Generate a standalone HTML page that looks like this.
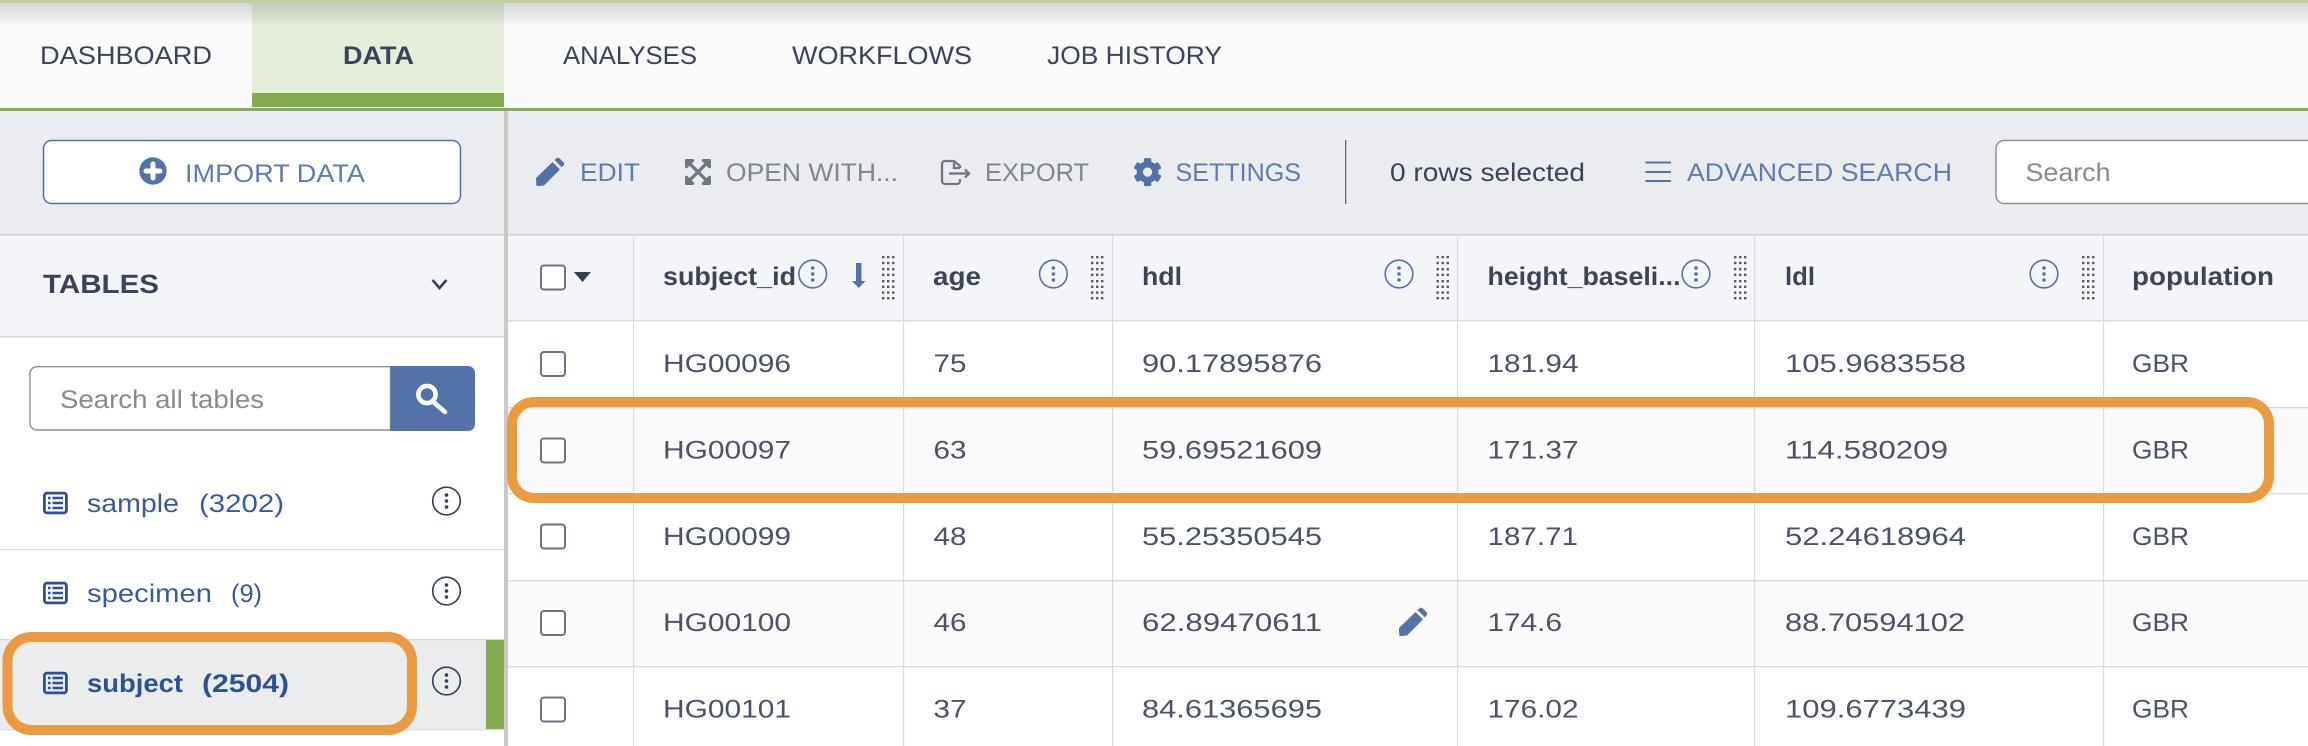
<!DOCTYPE html>
<html lang="en">
<head>
<meta charset="utf-8">
<title>Data tables</title>
<style>
html,body{margin:0;padding:0;background:#fff;width:2308px;height:746px;overflow:hidden}
svg{display:block}
text{font-family:"Liberation Sans",Arial,sans-serif;font-size:25.5px;text-rendering:geometricPrecision}
.n{fill:#39445a}
.b{fill:#5f7cb0}
.g{fill:#7f8692}
.c{fill:#4a5466}
.h{fill:#3a4558;font-weight:bold;font-size:25.5px}
.p{fill:#868a91}
.l{fill:#3a5b9a}
.lb{fill:#2f5193;font-weight:bold}
</style>
</head>
<body>
<svg xmlns="http://www.w3.org/2000/svg" width="2308" height="746" viewBox="0 0 2308 746">
<defs>
<linearGradient id="sh" x1="0" y1="0" x2="0" y2="1"><stop offset="0" stop-color="#000" stop-opacity=".15"/><stop offset="1" stop-color="#000" stop-opacity="0"/></linearGradient>
<g id="keb"><circle r="13.8" fill="none" stroke="#333f52" stroke-width="1.6"/><circle cy="-6" r="1.8" fill="#333f52"/><circle r="1.8" fill="#333f52"/><circle cy="6" r="1.8" fill="#333f52"/></g>
<g id="inf"><circle r="13.8" fill="none" stroke="#5472a8" stroke-width="1.6"/><circle cy="-6" r="1.8" fill="#5472a8"/><circle r="1.8" fill="#5472a8"/><circle cy="6" r="1.8" fill="#5472a8"/></g>
<g id="tbl"><rect x="1.4" y="1.4" width="22" height="19.800" rx="2.500" fill="none" stroke="#2f5193" stroke-width="2.800"/><path d="M5 6.300h2.600M5 11.300h2.600M5 16.300h2.600M9.500 6.300h10.500M9.500 11.300h10.500M9.500 16.300h10.500" stroke="#2f5193" stroke-width="2.400" fill="none"/></g>
<g id="grip" fill="#555c68"><rect x="0" y="0" width="2.400" height="2.400"/><rect x="5" y="0" width="2.400" height="2.400"/><rect x="10" y="0" width="2.400" height="2.400"/></g>
<g id="grips"><use href="#grip" y="256"/><use href="#grip" y="261.800"/><use href="#grip" y="268"/><use href="#grip" y="273.600"/><use href="#grip" y="280"/><use href="#grip" y="285.600"/><use href="#grip" y="291.400"/><use href="#grip" y="297"/></g>
<rect id="cb" width="24" height="24" rx="3" fill="#fff" stroke="#6b7484" stroke-width="2"/>
<path id="pen" d="M0 21L16.500 5 24 12.500 8 28.500Q5 29 .5 29 0 25 0 21ZM18.500 3L20.500 1.200Q22 0 23.500 1.200L27.500 5.200Q29 7 27.500 8.500L25.700 10.300Z" fill="#5472a8"/>
</defs>

<!-- nav -->
<rect width="2308" height="108" fill="#fafafa"/>
<rect x="252" y="3" width="252" height="105" fill="#e5eedb"/>
<rect x="252" y="93" width="252" height="14" fill="#84aa52"/>
<rect y="3" width="2308" height="24" fill="url(#sh)"/>
<rect width="2308" height="3" fill="#bdd29f"/>
<rect y="108" width="2308" height="3" fill="#84aa52"/>
<text class="n" x="40" y="64" textLength="172" lengthAdjust="spacingAndGlyphs">DASHBOARD</text>
<text class="n" x="343" y="64" textLength="71" lengthAdjust="spacingAndGlyphs" font-weight="bold">DATA</text>
<text class="n" x="563" y="64" textLength="134" lengthAdjust="spacingAndGlyphs">ANALYSES</text>
<text class="n" x="792" y="64" textLength="180" lengthAdjust="spacingAndGlyphs">WORKFLOWS</text>
<text class="n" x="1047" y="64" textLength="175" lengthAdjust="spacingAndGlyphs">JOB HISTORY</text>

<!-- toolbar -->
<rect y="111" width="2308" height="123" fill="#eaecf0"/>
<rect y="234" width="2308" height="1.500" fill="#d0d2d6"/>
<rect x="43.500" y="140.500" width="417" height="63" rx="8" fill="#fff" stroke="#5472a8" stroke-width="1.500"/>
<circle cx="153" cy="171" r="13.700" fill="#5472a8"/>
<path d="M146 171h14M153 164v14" stroke="#fff" stroke-width="5" stroke-linecap="round"/>
<text class="b" x="185" y="182" textLength="180" lengthAdjust="spacingAndGlyphs">IMPORT DATA</text>

<use href="#pen" x="536" y="157"/>
<text class="b" x="580" y="181" textLength="60" lengthAdjust="spacingAndGlyphs">EDIT</text>
<path transform="translate(685 157.100) scale(.058)" fill="#6f7785" d="M448 344v112a23.940 23.940 0 0 1-24 24H312c-21.390 0-32.090-25.900-17-41l36.200-36.200L224 295.600 116.770 402.900 153 439c15.090 15.100 4.390 41-17 41H24a23.940 23.940 0 0 1-24-24V344c0-21.400 25.890-32.100 41-17l36.190 36.200L184.460 256 77.180 148.700 41 185c-15.100 15.100-41 4.400-41-17V56a23.940 23.940 0 0 1 24-24h112c21.390 0 32.090 25.900 17 41l-36.200 36.200L224 216.400l107.230-107.300L295 73c-15.090-15.100-4.390-41 17-41h112a23.940 23.940 0 0 1 24 24v112c0 21.400-25.890 32.100-41 17l-36.190-36.200L263.540 256l107.280 107.300L407 327.100c15.100-15.200 41-4.500 41 16.900z"/>
<text class="g" x="726" y="181" textLength="172" lengthAdjust="spacingAndGlyphs">OPEN WITH...</text>
<path d="M960 168v-2l-6-5h-9a3 3 0 0 0-3 3v17a3 3 0 0 0 3 3h12a3 3 0 0 0 3-3v-2M954 161v7h6M949 173.500h20M965 169.500l4 4-4 4" fill="none" stroke="#6f7785" stroke-width="2.300"/>
<text class="g" x="985" y="181" textLength="104" lengthAdjust="spacingAndGlyphs">EXPORT</text>
<path transform="translate(1133 157.500) scale(.057)" fill="#5472a8" d="M487.400 315.700l-42.600-24.600c4.300-23.200 4.300-47 0-70.200l42.600-24.600c4.900-2.800 7.100-8.600 5.500-14-11.100-35.600-30-67.800-54.700-94.600-3.800-4.100-10-5.100-14.800-2.300L380.800 110c-17.900-15.400-38.500-27.300-60.800-35.100V25.800c0-5.600-3.900-10.500-9.400-11.700-36.700-8.200-74.300-7.800-109.200 0-5.500 1.200-9.400 6.100-9.400 11.700V75c-22.200 7.900-42.800 19.800-60.800 35.100L88.700 85.500c-4.900-2.800-11-1.900-14.800 2.300-24.700 26.700-43.600 58.900-54.700 94.600-1.700 5.400.6 11.200 5.500 14L67.300 221c-4.300 23.200-4.300 47 0 70.200l-42.600 24.600c-4.900 2.800-7.100 8.600-5.500 14 11.100 35.600 30 67.800 54.700 94.600 3.800 4.100 10 5.100 14.800 2.300l42.600-24.600c17.900 15.400 38.500 27.300 60.800 35.100v49.200c0 5.600 3.900 10.500 9.400 11.700 36.700 8.200 74.300 7.800 109.200 0 5.500-1.200 9.400-6.100 9.400-11.700v-49.200c22.200-7.900 42.800-19.800 60.800-35.100l42.600 24.600c4.900 2.800 11 1.900 14.800-2.300 24.700-26.700 43.600-58.900 54.700-94.600 1.500-5.500-.7-11.300-5.600-14.100zM256 336c-44.100 0-80-35.900-80-80s35.900-80 80-80 80 35.900 80 80-35.900 80-80 80z"/>
<text class="b" x="1175.500" y="181" textLength="125.500" lengthAdjust="spacingAndGlyphs">SETTINGS</text>
<rect x="1345" y="140" width="1.300" height="64" fill="#626a78"/>
<text class="n" x="1390" y="181" textLength="195" lengthAdjust="spacingAndGlyphs">0 rows selected</text>
<path d="M1645.500 162.500h25.500M1645.500 172h25.500M1645.500 181h25.500" stroke="#5472a8" stroke-width="2"/>
<text class="b" x="1687" y="181" textLength="265" lengthAdjust="spacingAndGlyphs">ADVANCED SEARCH</text>
<rect x="1996" y="140.500" width="340" height="63" rx="8" fill="#fff" stroke="#8b9099" stroke-width="1.500"/>
<text class="p" x="2025.500" y="181" textLength="85" lengthAdjust="spacingAndGlyphs">Search</text>

<!-- sidebar -->
<rect y="235.500" width="504" height="100.500" fill="#f4f5f8"/>
<rect y="336" width="504" height="1.500" fill="#d5d7da"/>
<text class="n" x="43" y="293" textLength="116" lengthAdjust="spacingAndGlyphs" font-weight="bold" style="font-size:26.500px">TABLES</text>
<path d="M432.500 280l7 8 7-8" fill="none" stroke="#333f52" stroke-width="2.600"/>
<path d="M390.500 366.700H37a7 7 0 0 0-7 7V423a7 7 0 0 0 7 7h353.500z" fill="#fff" stroke="#8b9099" stroke-width="1.400"/>
<path d="M390.500 366H468a7 7 0 0 1 7 7V424a7 7 0 0 1-7 7H390.500z" fill="#5472a8"/>
<circle cx="427" cy="394.500" r="8.600" fill="none" stroke="#fff" stroke-width="4.600"/>
<path d="M434.500 403l10.500 9" stroke="#fff" stroke-width="4.600" stroke-linecap="round"/>
<text class="p" x="60" y="408" textLength="204" lengthAdjust="spacingAndGlyphs">Search all tables</text>

<use href="#tbl" x="43" y="491.700"/>
<text class="l" x="87" y="512" textLength="92" lengthAdjust="spacingAndGlyphs">sample</text>
<text class="l" x="199" y="512" textLength="85" lengthAdjust="spacingAndGlyphs">(3202)</text>
<use href="#keb" x="446.500" y="501"/>
<rect y="549" width="504" height="1.300" fill="#d8d9dc"/>
<use href="#tbl" x="43" y="581.700"/>
<text class="l" x="87" y="602" textLength="125" lengthAdjust="spacingAndGlyphs">specimen</text>
<text class="l" x="231" y="602" textLength="31" lengthAdjust="spacingAndGlyphs">(9)</text>
<use href="#keb" x="446.500" y="591"/>
<rect y="639" width="504" height="91" fill="#ebecee"/>
<rect y="639" width="504" height="1.300" fill="#d8d9dc"/>
<rect y="729" width="504" height="1.300" fill="#d8d9dc"/>
<rect x="486" y="640" width="18" height="89" fill="#84aa52"/>
<use href="#tbl" x="43" y="671.700"/>
<text class="lb" x="87" y="692" textLength="96" lengthAdjust="spacingAndGlyphs">subject</text>
<text class="lb" x="202" y="692" textLength="87" lengthAdjust="spacingAndGlyphs">(2504)</text>
<use href="#keb" x="446.500" y="681"/>
<rect x="504" y="111" width="4" height="635" fill="#c9c9c9"/>

<!-- table -->
<rect x="508" y="235.500" width="1800" height="84.500" fill="#f4f5f8"/>
<rect x="508" y="407" width="1800" height="86" fill="#fafafa"/>
<rect x="508" y="580" width="1800" height="86" fill="#fafafa"/>
<g fill="#d8dade">
<rect x="508" y="320" width="1800" height="1.500"/>
<rect x="508" y="407" width="1800" height="1.300"/>
<rect x="508" y="493" width="1800" height="1.300"/>
<rect x="508" y="580" width="1800" height="1.300"/>
<rect x="508" y="666" width="1800" height="1.300"/>
<rect x="633" y="235" width="1.200" height="511"/>
<rect x="903" y="235" width="1.200" height="511"/>
<rect x="1112" y="235" width="1.200" height="511"/>
<rect x="1457" y="235" width="1.200" height="511"/>
<rect x="1754" y="235" width="1.200" height="511"/>
<rect x="2103" y="235" width="1.200" height="511"/>
</g>

<use href="#cb" x="541" y="265.500"/>
<path d="M574 272h17l-8.500 10z" fill="#333f52"/>
<text class="h" x="663" y="285" textLength="133" lengthAdjust="spacingAndGlyphs">subject_id</text>
<use href="#inf" x="812.700" y="274"/>
<path d="M856 263h5.500v18h4l-6.750 7-6.750-7h4z" fill="#5472a8"/>
<use href="#grips" x="882"/>
<text class="h" x="933" y="285" textLength="48" lengthAdjust="spacingAndGlyphs">age</text>
<use href="#inf" x="1053.400" y="274"/>
<use href="#grips" x="1091"/>
<text class="h" x="1142" y="285" textLength="40" lengthAdjust="spacingAndGlyphs">hdl</text>
<use href="#inf" x="1399" y="274"/>
<use href="#grips" x="1436.500"/>
<text class="h" x="1487.500" y="285" textLength="193" lengthAdjust="spacingAndGlyphs">height_baseli...</text>
<use href="#inf" x="1696" y="274"/>
<use href="#grips" x="1734"/>
<text class="h" x="1785" y="285" textLength="30" lengthAdjust="spacingAndGlyphs">ldl</text>
<use href="#inf" x="2044" y="274"/>
<use href="#grips" x="2082"/>
<text class="h" x="2132" y="285" textLength="142" lengthAdjust="spacingAndGlyphs">population</text>

<!-- rows -->
<use href="#cb" x="541" y="352"/>
<text class="c" x="663" y="372" textLength="128" lengthAdjust="spacingAndGlyphs">HG00096</text>
<text class="c" x="933.500" y="372" textLength="33" lengthAdjust="spacingAndGlyphs">75</text>
<text class="c" x="1142" y="372" textLength="180" lengthAdjust="spacingAndGlyphs">90.17895876</text>
<text class="c" x="1487.500" y="372" textLength="91" lengthAdjust="spacingAndGlyphs">181.94</text>
<text class="c" x="1785" y="372" textLength="181" lengthAdjust="spacingAndGlyphs">105.9683558</text>
<text class="c" x="2132" y="372" textLength="57" lengthAdjust="spacingAndGlyphs">GBR</text>

<use href="#cb" x="541" y="438.500"/>
<text class="c" x="663" y="458.500" textLength="128" lengthAdjust="spacingAndGlyphs">HG00097</text>
<text class="c" x="933.500" y="458.500" textLength="33" lengthAdjust="spacingAndGlyphs">63</text>
<text class="c" x="1142" y="458.500" textLength="180" lengthAdjust="spacingAndGlyphs">59.69521609</text>
<text class="c" x="1487.500" y="458.500" textLength="91" lengthAdjust="spacingAndGlyphs">171.37</text>
<text class="c" x="1785" y="458.500" textLength="163" lengthAdjust="spacingAndGlyphs">114.580209</text>
<text class="c" x="2132" y="458.500" textLength="57" lengthAdjust="spacingAndGlyphs">GBR</text>

<use href="#cb" x="541" y="524.500"/>
<text class="c" x="663" y="545" textLength="128" lengthAdjust="spacingAndGlyphs">HG00099</text>
<text class="c" x="933.500" y="545" textLength="33" lengthAdjust="spacingAndGlyphs">48</text>
<text class="c" x="1142" y="545" textLength="180" lengthAdjust="spacingAndGlyphs">55.25350545</text>
<text class="c" x="1487.500" y="545" textLength="90.500" lengthAdjust="spacingAndGlyphs">187.71</text>
<text class="c" x="1785" y="545" textLength="181" lengthAdjust="spacingAndGlyphs">52.24618964</text>
<text class="c" x="2132" y="545" textLength="57" lengthAdjust="spacingAndGlyphs">GBR</text>

<use href="#cb" x="541" y="611"/>
<text class="c" x="663" y="631" textLength="128" lengthAdjust="spacingAndGlyphs">HG00100</text>
<text class="c" x="933.500" y="631" textLength="33" lengthAdjust="spacingAndGlyphs">46</text>
<text class="c" x="1142" y="631" textLength="180" lengthAdjust="spacingAndGlyphs">62.89470611</text>
<use href="#pen" x="1399" y="607"/>
<text class="c" x="1487.500" y="631" textLength="74.500" lengthAdjust="spacingAndGlyphs">174.6</text>
<text class="c" x="1785" y="631" textLength="180" lengthAdjust="spacingAndGlyphs">88.70594102</text>
<text class="c" x="2132" y="631" textLength="57" lengthAdjust="spacingAndGlyphs">GBR</text>

<use href="#cb" x="541" y="697.500"/>
<text class="c" x="663" y="717.500" textLength="128" lengthAdjust="spacingAndGlyphs">HG00101</text>
<text class="c" x="933.500" y="717.500" textLength="33" lengthAdjust="spacingAndGlyphs">37</text>
<text class="c" x="1142" y="717.500" textLength="180" lengthAdjust="spacingAndGlyphs">84.61365695</text>
<text class="c" x="1487.500" y="717.500" textLength="91" lengthAdjust="spacingAndGlyphs">176.02</text>
<text class="c" x="1785" y="717.500" textLength="181" lengthAdjust="spacingAndGlyphs">109.6773439</text>
<text class="c" x="2132" y="717.500" textLength="57" lengthAdjust="spacingAndGlyphs">GBR</text>

<!-- orange highlights -->
<rect x="7.500" y="637" width="404.500" height="93" rx="24" fill="none" stroke="#ea9a40" stroke-width="10"/>
<rect x="512" y="402" width="1757" height="96" rx="22" fill="none" stroke="#ea9a40" stroke-width="10"/>
</svg>
</body>
</html>
